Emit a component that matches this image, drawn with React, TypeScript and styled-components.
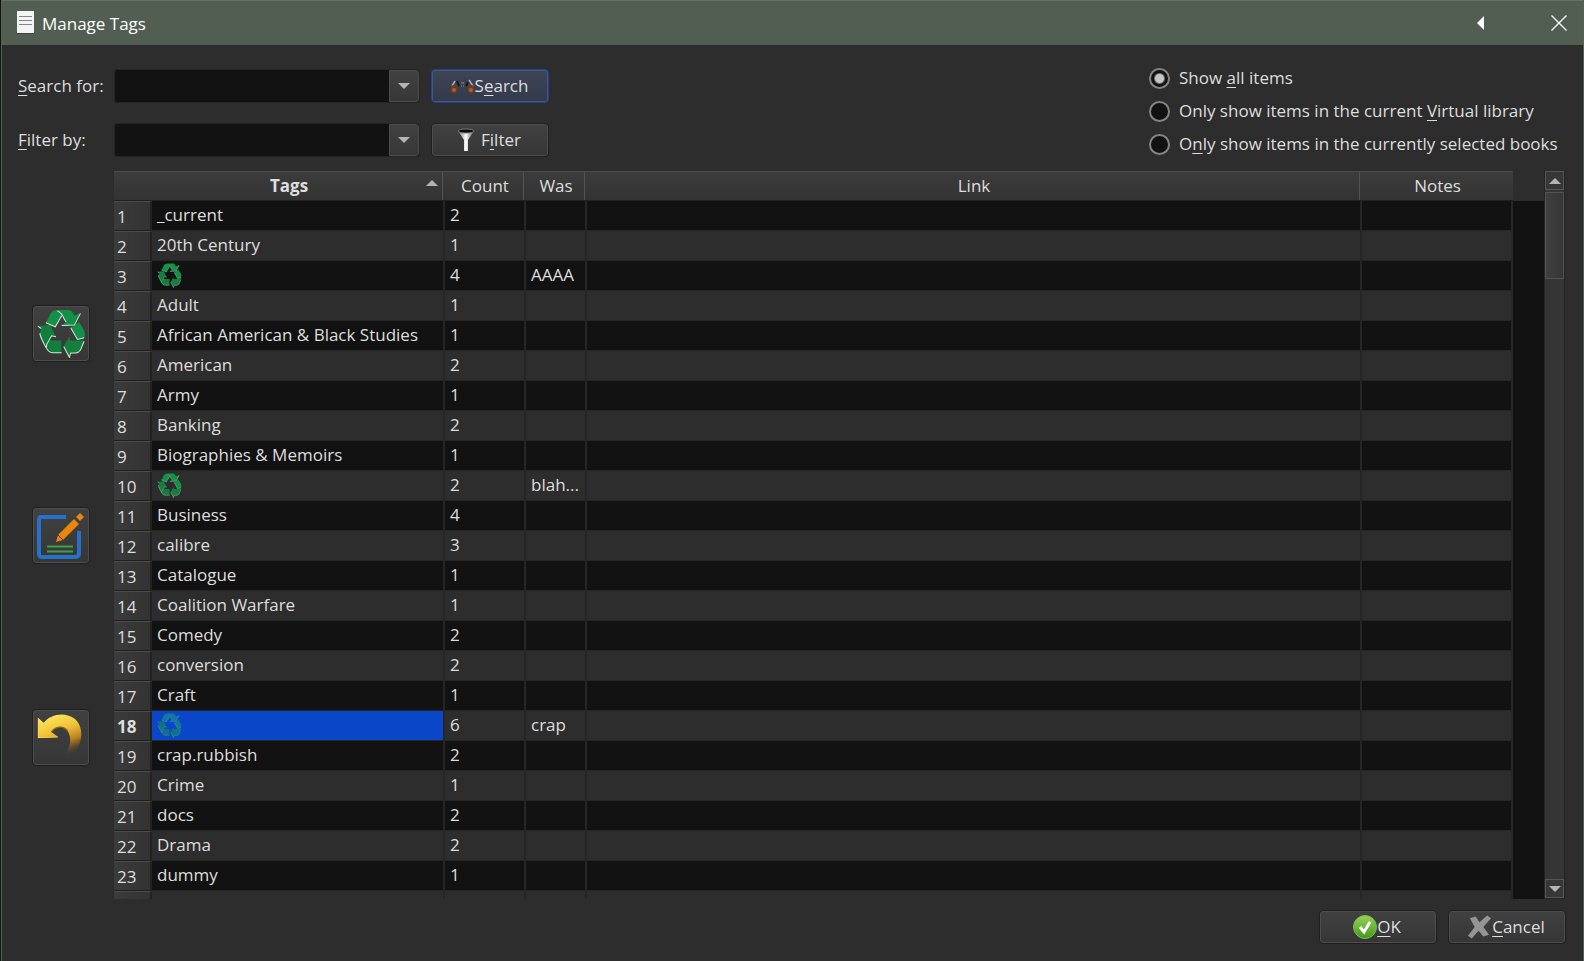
import React, { useState } from 'react';
import styled, { createGlobalStyle, css } from 'styled-components';

const GlobalStyle = createGlobalStyle`
  *, *::before, *::after { box-sizing: border-box; }
  body {
    margin: 0;
    background: #131513;
    color: #dedede;
    font-family: "Open Sans", "Noto Sans", sans-serif;
    font-size: 17px;
    line-height: 24px;
  }
  button, input { font: inherit; color: inherit; }
`;

const Dialog = styled.div`
  height: 100vh;
  min-height: 480px;
  display: flex;
  flex-direction: column;
  margin-left: 1px;
  background: #2d2d2d;
  border-left: 1px solid #566056;
  border-right: 1px solid #566056;
`;

const TitleBar = styled.header`
  display: flex;
  align-items: center;
  height: 45px;
  flex: none;
  padding: 0 16px 0 14px;
  background: #535e53;
  border-top: 1px solid #667066;
  color: #fff;
`;

const Title = styled.h1`
  margin: 0 auto 0 7px;
  padding-top: 2px;
  font-size: 17px;
  line-height: 24px;
  font-weight: 400;
`;

const TitleButton = styled.button`
  display: flex;
  align-items: center;
  justify-content: center;
  width: 16px;
  height: 24px;
  padding: 0;
  margin-left: 62px;
  border: 0;
  background: none;
`;

const Controls = styled.div`
  display: flex;
  justify-content: space-between;
  flex: none;
  padding: 24px 17px 0 16px;
`;

const SearchGrid = styled.div`
  display: grid;
  grid-template-columns: 85px 306px 118px;
  grid-auto-rows: 34px;
  gap: 20px 11px;
  align-items: center;
`;

const Label = styled.label`
  white-space: nowrap;
`;

const Key = styled.u`
  text-underline-offset: 3px;
  text-decoration-thickness: 1px;
`;

const Combo = styled.div`
  display: flex;
  height: 34px;
  border: 1px solid #252525;
  border-radius: 3px;
  background: #121212;
`;

const ComboInput = styled.input`
  flex: 1;
  min-width: 0;
  padding: 0 6px;
  border: 0;
  outline: 0;
  background: transparent;
`;

const ComboArrow = styled.button`
  display: flex;
  align-items: center;
  justify-content: center;
  width: 30px;
  padding: 0;
  border: 1px solid #4c4c4c;
  border-radius: 0 3px 3px 0;
  background: linear-gradient(#414141, #373737);
`;

const face = css`
  border: 1px solid #1f1f1f;
  border-radius: 4px;
  background: linear-gradient(#414141, #363636);
  box-shadow: inset 0 0 0 1px #4e4e4e;
`;

const PushButton = styled.button<{ $primary?: boolean; $gap?: number }>`
  display: flex;
  align-items: center;
  justify-content: center;
  gap: ${(p) => p.$gap ?? 0}px;
  width: 118px;
  height: 34px;
  padding: 0 2px 0 0;
  ${face}
  ${(p) =>
    p.$primary &&
    css`
      border-color: #20429a;
      background: linear-gradient(#3d4556, #323a4b);
      box-shadow: inset 0 0 0 1px #45577f;
    `}
`;

const RadioGroup = styled.fieldset`
  display: flex;
  flex-direction: column;
  gap: 9px;
  width: 417px;
  margin: -4px 0 0;
  padding: 1px 0 0;
  border: 0;
`;

const RadioLabel = styled.label`
  display: flex;
  align-items: center;
  gap: 9px;
  white-space: nowrap;
`;

const Radio = styled.input`
  appearance: none;
  width: 21px;
  height: 21px;
  margin: 0;
  flex: none;
  border: 2px solid #858585;
  border-radius: 50%;
  background: #121212;
  &:checked {
    background: radial-gradient(circle, #c6c6c6 0 4px, #121212 6px);
  }
`;

const Main = styled.main`
  display: flex;
  flex: 1 1 0;
  min-height: 0;
  padding: 14px 18px 0 0;
`;

const SideTools = styled.div`
  display: flex;
  flex-direction: column;
  align-items: center;
  justify-content: center;
  gap: 145px;
  width: 112px;
  flex: none;
  padding-left: 6px;
`;

const ToolButton = styled.button`
  display: flex;
  align-items: center;
  justify-content: center;
  width: 58px;
  height: 57px;
  flex: none;
  padding: 0;
  ${face}
`;

const TableArea = styled.div`
  flex: 1;
  min-width: 0;
  overflow: hidden;
  background: linear-gradient(#2d2d2d 30px, #121212 30px);
  padding-right: 31px;
`;

const Table = styled.table`
  width: 100%;
  table-layout: fixed;
  border-collapse: separate;
  border-spacing: 0;
`;

const Col = styled.col<{ $w?: number }>`
  width: ${(p) => (p.$w ? `${p.$w}px` : 'auto')};
`;

const HeadCell = styled.th<{ $bold?: boolean }>`
  height: 30px;
  padding: 0;
  font-weight: ${(p) => (p.$bold ? 700 : 400)};
  background: linear-gradient(#3c3c3c, #333333);
  border-top: 1px solid #4b4b4b;
  border-bottom: 1px solid #202020;
`;

const HeadInner = styled.div<{ $last?: boolean; $indent?: number }>`
  position: relative;
  height: 28px;
  padding-top: 2px;
  padding-left: ${(p) => p.$indent ?? 2}px;
  margin-right: 2px;
  border-right: ${(p) => (p.$last ? '0' : '1px solid #545454')};
`;

const SortMark = styled.svg`
  position: absolute;
  top: 8px;
  right: 4px;
`;

const Row = styled.tr`
  height: 30px;
  background: #2d2d2d;
  &:nth-child(odd) { background: #121212; }
`;

const RowHead = styled.th<{ $current?: boolean }>`
  padding: 1px 0 0 3px;
  text-align: left;
  line-height: 24px;
  font-weight: ${(p) => (p.$current ? 700 : 400)};
  background: linear-gradient(90deg, #3b3b3b, #333333);
  border-top: 1px solid #4b4b4b;
  border-bottom: 1px solid #202020;
  border-right: 2px solid #222222;
`;

const Cell = styled.td<{ $selected?: boolean }>`
  height: 30px;
  padding: 0 4px 1px 5px;
  overflow: hidden;
  white-space: nowrap;
  line-height: 24px;
  background: ${(p) => (p.$selected ? '#0a46c8' : 'transparent')};
  border-right: 2px solid #262626;
  border-bottom: 1px solid #262626;
  svg { display: block; }
`;

const ScrollBar = styled.div`
  display: flex;
  flex-direction: column;
  width: 21px;
  flex: none;
  background: #353535;
  border: 1px solid #242424;
  border-top: 0;
`;

const ScrollButton = styled.button`
  display: flex;
  align-items: center;
  justify-content: center;
  height: 19px;
  flex: none;
  padding: 0;
  border: 1px solid #565656;
  background: #373737;
`;

const Thumb = styled.div`
  height: 87px;
  margin-top: 2px;
  margin-bottom: auto;
  border: 1px solid #545454;
  background: linear-gradient(90deg, #404040, #363636);
`;

const Footer = styled.footer`
  display: flex;
  justify-content: flex-end;
  gap: 11px;
  flex: none;
  padding: 11px 17px 17px;
`;

const Triangle = ({ up }: { up?: boolean }) => (
  <svg width="12" height="6" viewBox="0 0 12 6" aria-hidden="true">
    <path d={up ? 'M0 6L6 0L12 6Z' : 'M0 0H12L6 6Z'} fill="#b4b4b4" />
  </svg>
);

const PageIcon = () => (
  <svg width="19" height="24" viewBox="0 0 19 24" aria-hidden="true">
    <path d="M1 22H18V23H1Z" fill="#3c443c" />
    <path d="M1 0H18V22H1Z" fill="#f4f4f4" />
    <path d="M3 5.500H16M3 9.500H16M3 13.500H16" stroke="#858585" />
  </svg>
);

const RecycleIcon = ({ size, tint }: { size: number; tint?: boolean }) => {
  const fill = tint ? '#12789a' : '#129246';
  const dark = tint ? '#0f7480' : '#12803c';
  const edge = tint ? '#6db0bd' : '#d4eadb';
  return (
    <svg width={size} height={size} viewBox="111 56 145 146" aria-hidden="true">
      <path d="M137 97L152 68Q158 58 170 60L184 75L165 109Z" fill={fill} />
      <path d="M172 59H205Q212 59 216 66L221 75L240 69L222 104L184 105L198 95L190 83Q183 68 172 59Z" fill={fill} />
      <path d="M211 112L236 95L251 120Q256 132 250 145L231 146Z" fill={fill} />
      <path d="M250 150Q247 165 238 180Q233 186 225 186H209L207 200L190 168L207 138L209 150Z" fill={dark} />
      <path d="M147 150H183V186H156Q146 186 140 174Q137 165 147 150Z" fill={dark} />
      <path d="M113 107L150 104L167 139L155 135L146 150Q138 160 138 172L120 140Q116 130 123 117Z" fill={dark} />
      <g fill="none" stroke={edge} strokeWidth={size > 30 ? 3 : 2}>
        <path d="M137 97L165 109L184 76M171 61Q185 68 190 83L197 95" />
        <path d="M184 105L222 104L240 69" />
        <path d="M211 112L231 147L251 142" />
        <path d="M190 168L207 200L211 187L225 187Q235 186 240 178L251 152" />
        <path d="M140 174Q146 186 156 186H184" />
        <path d="M113 107L123 114M119 128Q120 140 138 172Q138 160 146 150L154 136L167 139" />
      </g>
    </svg>
  );
};

const EditIcon = () => (
  <svg width="50" height="50" viewBox="0 0 50 50" aria-hidden="true">
    <path d="M30 7H5Q3 7 3 10V44Q3 47 6 47H39Q43 47 43 43V21" fill="none" stroke="#2671c9" strokeWidth="4" />
    <path d="M11 36.500H37M11 41.500H37" stroke="#3fa047" strokeWidth="2" />
    <path d="M20 32L22 25L38 9L43 14L27 30ZM40 7L44 3L48 7L44 11Z" fill="#ea850f" />
    <path d="M22 25L27 30" stroke="#373737" strokeWidth="1" />
  </svg>
);

const UndoIcon = () => (
  <svg width="48" height="48" viewBox="114 66 144 144" aria-hidden="true">
    <defs>
      <linearGradient id="undo" gradientUnits="userSpaceOnUse" x1="160" y1="70" x2="205" y2="192">
        <stop offset="0" stopColor="#fde75c" />
        <stop offset="0.4" stopColor="#efc136" />
        <stop offset="0.7" stopColor="#b98120" />
        <stop offset="1" stopColor="#6e4d18" stopOpacity="0" />
      </linearGradient>
    </defs>
    <path
      d="M117 80L134 95C155 68 200 61 228 84C256 110 252 155 222 194L198 188C214 170 220 145 206 120C193 103 170 105 157 123L178 138L117 141Z"
      fill="url(#undo)"
    />
    <path d="M118 82V140L176 138" fill="none" stroke="#f7d44a" strokeWidth="3" />
    <path d="M157 123C170 105 193 103 206 120" fill="none" stroke="#8f6216" strokeWidth="4" />
  </svg>
);

const BinocularsIcon = () => (
  <svg width="25" height="16" viewBox="0 0 25 16" aria-hidden="true">
    <path d="M1 9L5 2L8 1L10 7L7 12Z" fill="#3c424e" />
    <path d="M24 9L20 2L17 1L15 7L18 12Z" fill="#3c424e" />
    <path d="M5 3L2 8M19 2L23 8" stroke="#a9afba" strokeWidth="1.500" />
    <path d="M7 3L9 8M18 4L16 8" stroke="#15171c" strokeWidth="2" />
    <path d="M11 5H14M11 8H12M13 8H14" stroke="#8a8a8a" />
    <ellipse cx="4" cy="11" rx="3.500" ry="4" fill="#74391f" />
    <ellipse cx="21" cy="11" rx="3.500" ry="4" fill="#74391f" />
    <ellipse cx="4" cy="12" rx="2" ry="2" fill="#b05c33" />
    <ellipse cx="21" cy="12" rx="2" ry="2" fill="#b05c33" />
  </svg>
);

const FunnelIcon = () => (
  <svg width="18" height="24" viewBox="0 0 18 24" aria-hidden="true">
    <defs>
      <linearGradient id="funnel">
        <stop offset="0" stopColor="#6a6a6a" />
        <stop offset="0.5" stopColor="#ffffff" />
        <stop offset="1" stopColor="#555555" />
      </linearGradient>
    </defs>
    <path d="M1 3L7 12V23H11V12L17 3Z" fill="url(#funnel)" />
    <ellipse cx="9" cy="3" rx="8" ry="2" fill="#0c0c0c" stroke="#777777" />
  </svg>
);

const OkIcon = () => (
  <svg width="24" height="24" viewBox="0 0 24 24" aria-hidden="true">
    <defs>
      <linearGradient id="ok" x1="0" y1="0" x2="0" y2="1">
        <stop offset="0" stopColor="#9bd05a" />
        <stop offset="1" stopColor="#3f9a1c" />
      </linearGradient>
    </defs>
    <circle cx="12" cy="12" r="11.500" fill="url(#ok)" stroke="#7dbb4a" />
    <path d="M7 12L11 17L17 7" fill="none" stroke="#fff" strokeWidth="3" />
  </svg>
);

const CancelIcon = () => (
  <svg width="25" height="24" viewBox="0 0 26 24" aria-hidden="true">
    <path d="M3 3L9 1L13 7L21 0L25 3L17 12L23 20L17 22L12 16L5 24L1 21L8 12Z" fill="#959595" />
  </svg>
);

interface Tag {
  name?: string;
  count: number;
  was?: string;
}

const tags: Tag[] = [
  { name: '_current', count: 2 },
  { name: '20th Century', count: 1 },
  { count: 4, was: 'AAAA' },
  { name: 'Adult', count: 1 },
  { name: 'African American & Black Studies', count: 1 },
  { name: 'American', count: 2 },
  { name: 'Army', count: 1 },
  { name: 'Banking', count: 2 },
  { name: 'Biographies & Memoirs', count: 1 },
  { count: 2, was: 'blah...' },
  { name: 'Business', count: 4 },
  { name: 'calibre', count: 3 },
  { name: 'Catalogue', count: 1 },
  { name: 'Coalition Warfare', count: 1 },
  { name: 'Comedy', count: 2 },
  { name: 'conversion', count: 2 },
  { name: 'Craft', count: 1 },
  { count: 6, was: 'crap' },
  { name: 'crap.rubbish', count: 2 },
  { name: 'Crime', count: 1 },
  { name: 'docs', count: 2 },
  { name: 'Drama', count: 2 },
  { name: 'dummy', count: 1 },
];

const ComboBox = ({ id }: { id: string }) => (
  <Combo>
    <ComboInput id={id} type="text" />
    <ComboArrow type="button" aria-label="Show history">
      <Triangle />
    </ComboArrow>
  </Combo>
);

export default function App() {
  const [scope, setScope] = useState(0);
  const [selected, setSelected] = useState(17);
  const scopes = [
    <>Show <Key>a</Key>ll items</>,
    <>Only show items in the current <Key>V</Key>irtual library</>,
    <>O<Key>n</Key>ly show items in the currently selected books</>,
  ];

  return (
    <>
      <GlobalStyle />
      <Dialog>
        <TitleBar>
          <PageIcon />
          <Title>Manage Tags</Title>
          <TitleButton type="button" aria-label="Collapse">
            <svg width="8" height="14" viewBox="0 0 8 14"><path d="M7 0V14L0 7Z" fill="#fff" /></svg>
          </TitleButton>
          <TitleButton type="button" aria-label="Close">
            <svg width="16" height="16" viewBox="0 0 16 16"><path d="M0.500 0.500L15.500 15.500M15.500 0.500L0.500 15.500" stroke="#fff" strokeWidth="1.300" /></svg>
          </TitleButton>
        </TitleBar>

        <Controls>
          <SearchGrid>
            <Label htmlFor="search"><Key>S</Key>earch for:</Label>
            <ComboBox id="search" />
            <PushButton type="button" $primary>
              <BinocularsIcon /><span>S<Key>e</Key>arch</span>
            </PushButton>
            <Label htmlFor="filter"><Key>F</Key>ilter by:</Label>
            <ComboBox id="filter" />
            <PushButton type="button" $gap={6}>
              <FunnelIcon /><span>F<Key>i</Key>lter</span>
            </PushButton>
          </SearchGrid>
          <RadioGroup>
            {scopes.map((text, i) => (
              <RadioLabel key={i}>
                <Radio type="radio" name="scope" checked={scope === i} onChange={() => setScope(i)} />
                <span>{text}</span>
              </RadioLabel>
            ))}
          </RadioGroup>
        </Controls>

        <Main>
          <SideTools>
            <ToolButton type="button" aria-label="Delete tag"><RecycleIcon size={49} /></ToolButton>
            <ToolButton type="button" aria-label="Rename tag"><EditIcon /></ToolButton>
            <ToolButton type="button" aria-label="Undo"><UndoIcon /></ToolButton>
          </SideTools>
          <TableArea>
            <Table>
              <colgroup>
                <Col $w={38} />
                <Col $w={293} />
                <Col $w={81} />
                <Col $w={61} />
                <Col />
                <Col $w={151} />
              </colgroup>
              <thead>
                <tr>
                  <HeadCell $bold colSpan={2}>
                    <HeadInner $indent={22}>
                      Tags
                      <SortMark width="12" height="6" viewBox="0 0 12 6">
                        <path d="M0 6L6 0L12 6Z" fill="#b4b4b4" />
                      </SortMark>
                    </HeadInner>
                  </HeadCell>
                  <HeadCell><HeadInner>Count</HeadInner></HeadCell>
                  <HeadCell><HeadInner>Was</HeadInner></HeadCell>
                  <HeadCell><HeadInner>Link</HeadInner></HeadCell>
                  <HeadCell><HeadInner $last>Notes</HeadInner></HeadCell>
                </tr>
              </thead>
              <tbody>
                {tags.map((tag, i) => (
                  <Row key={i} onClick={() => setSelected(i)}>
                    <RowHead $current={selected === i}>{i + 1}</RowHead>
                    <Cell $selected={selected === i}>
                      {tag.name ?? <RecycleIcon size={25} tint={selected === i} />}
                    </Cell>
                    <Cell>{tag.count}</Cell>
                    <Cell>{tag.was}</Cell>
                    <Cell />
                    <Cell />
                  </Row>
                ))}
                <Row>
                  <RowHead />
                  <Cell />
                  <Cell />
                  <Cell />
                  <Cell />
                  <Cell />
                </Row>
              </tbody>
            </Table>
          </TableArea>
          <ScrollBar>
            <ScrollButton type="button" aria-label="Scroll up"><Triangle up /></ScrollButton>
            <Thumb />
            <ScrollButton type="button" aria-label="Scroll down"><Triangle /></ScrollButton>
          </ScrollBar>
        </Main>

        <Footer>
          <PushButton type="button"><OkIcon /><span><Key>O</Key>K</span></PushButton>
          <PushButton type="button"><CancelIcon /><span><Key>C</Key>ancel</span></PushButton>
        </Footer>
      </Dialog>
    </>
  );
}
